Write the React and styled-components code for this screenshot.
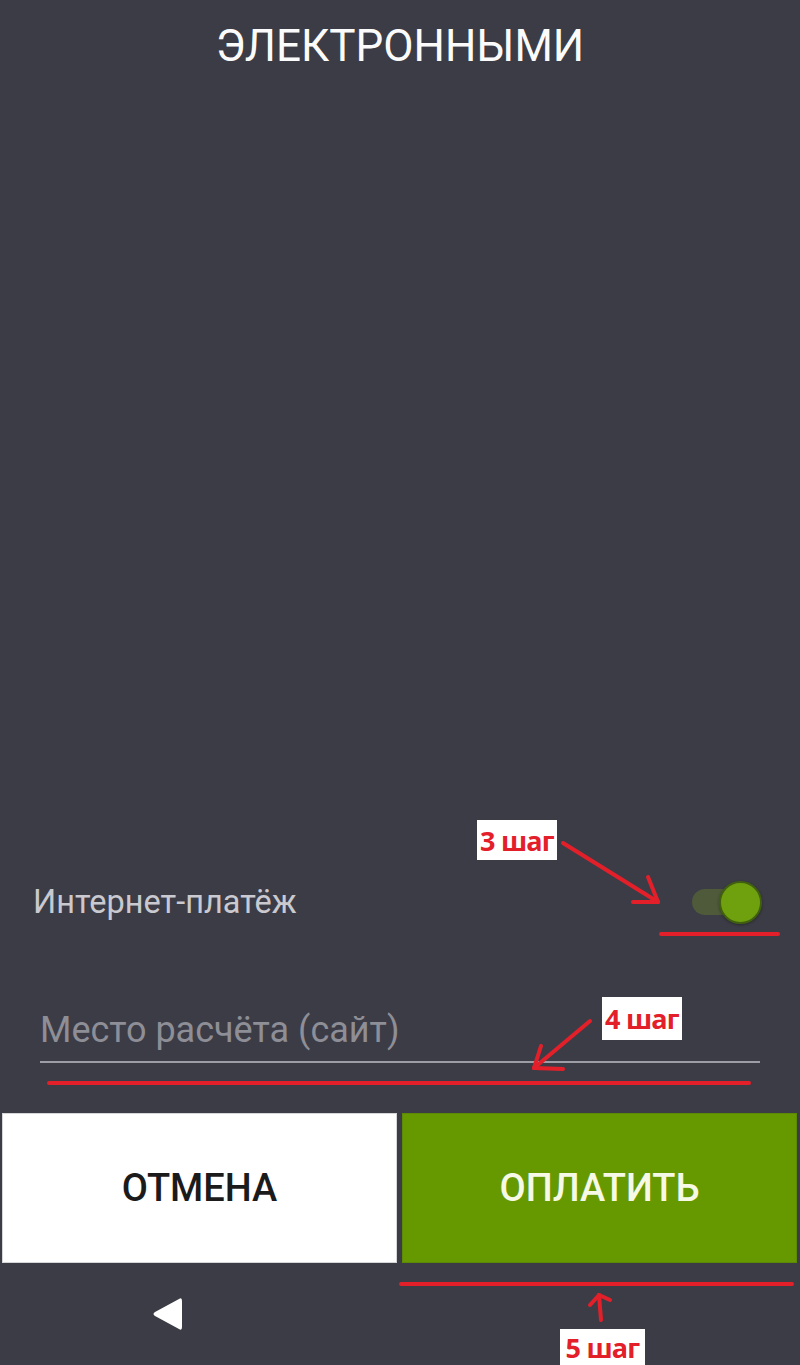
import React from 'react';
import styled, { createGlobalStyle } from 'styled-components';

const GlobalStyle = createGlobalStyle`
  html, body {
    margin: 0;
    padding: 0;
    background: #3c3c46;
  }
  * {
    box-sizing: border-box;
  }
`;

const Screen = styled.div`
  position: relative;
  width: 800px;
  height: 1365px;
  display: flex;
  flex-direction: column;
  background: #3c3c46;
  font-family: Roboto, "Noto Sans", sans-serif;
  overflow: hidden;
`;

const Title = styled.h1`
  margin: 0;
  padding-top: 19px;
  text-align: center;
  font-size: 44px;
  font-weight: 400;
  line-height: 54px;
  color: #fbfbfb;
`;

const Spacer = styled.div`
  flex: 1;
`;

const SettingRow = styled.div`
  display: flex;
  align-items: center;
  justify-content: space-between;
  height: 44px;
  padding: 0 38px 0 33px;
  margin-bottom: 82px;
`;

const SettingLabel = styled.span`
  font-size: 32.5px;
  line-height: 44px;
  color: #c9c9cf;
`;

const Toggle = styled.div`
  position: relative;
  width: 70px;
  height: 44px;
  display: flex;
  align-items: center;
  justify-content: flex-end;

  &::before {
    content: '';
    position: absolute;
    left: 0;
    top: 9px;
    width: 58px;
    height: 26px;
    border-radius: 13px;
    background: #4f5a3a;
  }
`;

const Thumb = styled.div`
  position: relative;
  width: 43px;
  height: 43px;
  border-radius: 50%;
  background: #6fa10f;
  border: 2px solid #40600f;
  box-shadow: 0 1px 3px rgba(0, 0, 0, 0.35);
`;

const Field = styled.div`
  margin: 0 40px 50px 40px;
  padding-bottom: 7px;
  border-bottom: 2px solid #9d9da5;
`;

const Placeholder = styled.div`
  font-size: 36px;
  line-height: 48px;
  color: #8e8e96;
`;

const ButtonRow = styled.div`
  display: grid;
  grid-template-columns: 1fr 1fr;
  gap: 5px;
  height: 150px;
  padding: 0 3px 0 2px;
`;

const ActionButton = styled.button`
  display: flex;
  align-items: center;
  justify-content: center;
  border: none;
  margin: 0;
  padding: 0;
  font-family: Roboto, "Noto Sans", sans-serif;
  font-size: 38px;
  font-weight: 500;
  letter-spacing: 0;
  background: ${(p) => (p.$primary ? '#669900' : '#ffffff')};
  color: ${(p) => (p.$primary ? '#f5f9e6' : '#1b1b1b')};
  box-shadow: ${(p) => (p.$primary ? 'inset 0 0 0 1px #5d8a05' : 'inset 0 0 0 1px #d6d6d6')};
`;

const NavBar = styled.div`
  height: 102px;
  display: flex;
  align-items: center;
  padding-left: 152px;
`;

const Overlay = styled.svg`
  position: absolute;
  inset: 0;
  pointer-events: none;
`;

const StepLabel = styled.div`
  position: absolute;
  left: ${(p) => p.$x}px;
  top: ${(p) => p.$y}px;
  width: ${(p) => p.$w}px;
  height: ${(p) => p.$h}px;
  background: #ffffff;
  color: #e3202a;
  font-family: "Open Sans", "Liberation Sans", sans-serif;
  font-weight: 700;
  font-size: 27px;
  line-height: 1;
  display: flex;
  align-items: center;
  justify-content: center;
  letter-spacing: -0.8px;
`;

const BackIcon = () => (
  <svg width="31" height="36" viewBox="0 0 31 36">
    <path
      d="M27 3 Q30 1 30 5 L30 31 Q30 35 27 33 L3 20 Q0 18 3 16 Z"
      fill="#ffffff"
    />
  </svg>
);

export default function App() {
  return (
    <>
      <GlobalStyle />
      <Screen>
        <Title>ЭЛЕКТРОННЫМИ</Title>
        <Spacer />
        <SettingRow>
          <SettingLabel>Интернет-платёж</SettingLabel>
          <Toggle>
            <Thumb />
          </Toggle>
        </SettingRow>
        <Field>
          <Placeholder>Место расчёта (сайт)</Placeholder>
        </Field>
        <ButtonRow>
          <ActionButton>ОТМЕНА</ActionButton>
          <ActionButton $primary>ОПЛАТИТЬ</ActionButton>
        </ButtonRow>
        <NavBar>
          <BackIcon />
        </NavBar>

        <Overlay width="800" height="1365" viewBox="0 0 800 1365">
          <g stroke="#e3202a" strokeWidth="4" strokeLinecap="round" fill="none">
            <line x1="563" y1="843" x2="658" y2="902" />
            <line x1="658" y1="902" x2="648" y2="877" />
            <line x1="658" y1="902" x2="633" y2="902" />
            <line x1="661" y1="934" x2="778" y2="934" />

            <line x1="590" y1="1021" x2="534" y2="1068" />
            <line x1="534" y1="1068" x2="563" y2="1069" />
            <line x1="534" y1="1068" x2="541" y2="1046" />
            <line x1="49" y1="1083" x2="749" y2="1083" />

            <line x1="401" y1="1284" x2="792" y2="1284" />
            <line x1="601" y1="1320" x2="599" y2="1295" />
            <line x1="599" y1="1295" x2="590" y2="1305" />
            <line x1="599" y1="1295" x2="610" y2="1300" />
          </g>
        </Overlay>
        <StepLabel $x={477} $y={820} $w={80} $h={40}>3 шаг</StepLabel>
        <StepLabel $x={602} $y={997} $w={80} $h={43}>4 шаг</StepLabel>
        <StepLabel $x={560} $y={1329} $w={85} $h={36}>5 шаг</StepLabel>
      </Screen>
    </>
  );
}
